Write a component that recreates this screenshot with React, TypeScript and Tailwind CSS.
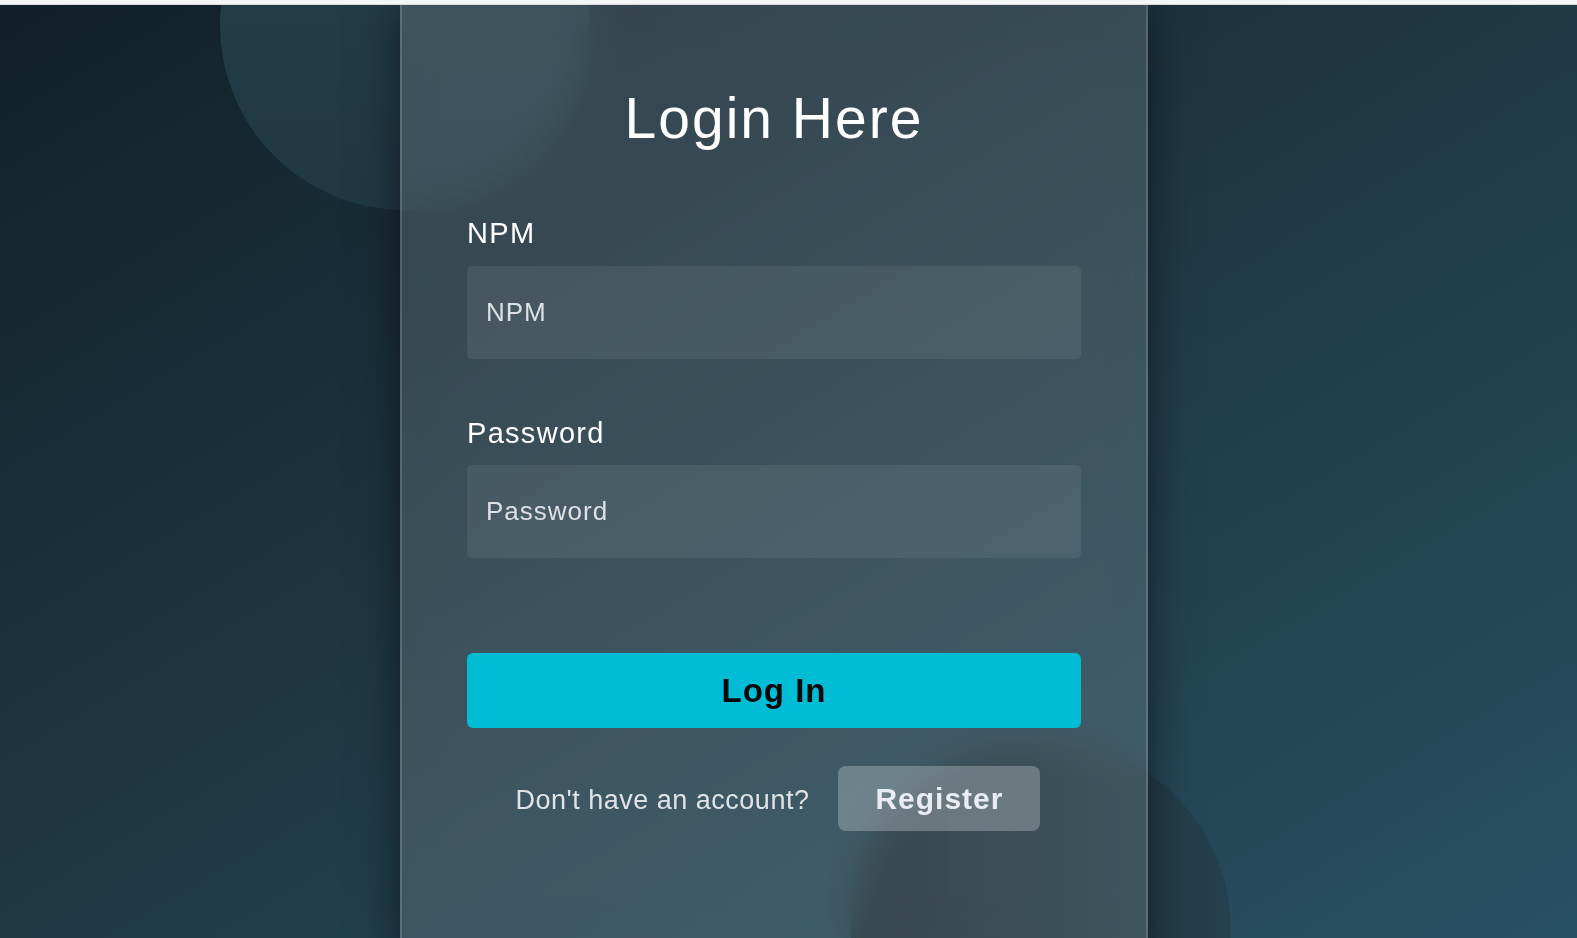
import React from "react";

export default function App() {
  return (
    <div
      className="flex h-[938px] w-full flex-col overflow-hidden"
      style={{ fontFamily: '"Liberation Sans", Arial, sans-serif' }}
    >
      <div className="h-[5px] w-full shrink-0 border-b border-[#d9dcdf] bg-[#f4f5f6]" />
      <div className="relative flex flex-1 overflow-hidden bg-gradient-to-br from-[#11202a] via-[#1f3945] to-[#285063] pl-[400px]">
        {/* decorative circles */}
        <div className="absolute left-[220px] top-[-165px] h-[370px] w-[370px] rounded-full bg-gradient-to-b from-[#233f4a] to-[#203844]" />
        <div className="absolute left-[851px] top-[735px] h-[380px] w-[380px] rounded-full bg-gradient-to-r from-[#1a2b34] to-[#25414d]" />

        {/* glass card */}
        <div className="relative flex h-[960px] w-[748px] flex-col items-center border-x-2 border-white/15 bg-white/[0.13] px-[65px] pt-[81px] shadow-[0_0_40px_rgba(8,7,16,0.6)] backdrop-blur-[18px]">
          <h1 className="text-[57px] font-normal leading-[64px] tracking-[2px] text-white">
            Login Here
          </h1>

          <div className="mt-[66px] flex w-full flex-col">
            <label className="text-[29px] leading-[34px] tracking-[1.3px] text-white">
              NPM
            </label>
            <input
              type="text"
              placeholder="NPM"
              className="mt-[16px] h-[93px] w-full rounded-[5px] bg-white/[0.07] pl-[19px] text-[26px] tracking-[1px] text-white outline-none placeholder:text-[#dde1e3]"
            />

            <label className="mt-[57px] text-[29px] leading-[34px] tracking-[1.3px] text-white">
              Password
            </label>
            <input
              type="password"
              placeholder="Password"
              className="mt-[15px] h-[93px] w-full rounded-[5px] bg-white/[0.07] pl-[19px] text-[26px] tracking-[1px] text-white outline-none placeholder:text-[#dde1e3]"
            />

            <button className="mt-[95px] h-[75px] w-full rounded-[6px] bg-[#00bcd4] text-[33px] font-bold tracking-[1px] text-[#080808]">
              Log In
            </button>

            <div className="mt-[38px] flex items-center justify-center gap-[29px] pl-[8px]">
              <span className="pt-[4px] text-[27px] tracking-[0.5px] text-[#dfe3e6]">
                Don't have an account?
              </span>
              <button className="h-[65px] w-[202px] rounded-[8px] bg-white/[0.25] text-[30px] font-bold tracking-[1px] text-[#e9edf3]">
                Register
              </button>
            </div>
          </div>
        </div>
      </div>
    </div>
  );
}
